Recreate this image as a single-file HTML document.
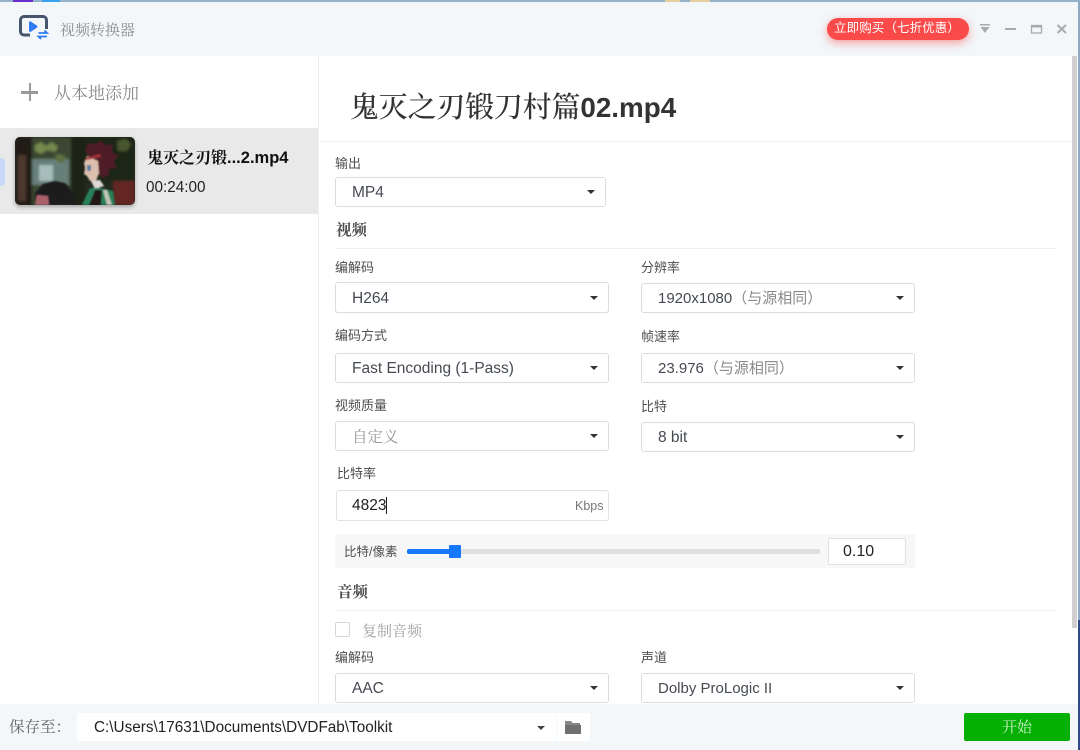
<!DOCTYPE html>
<html lang="zh"><head><meta charset="utf-8"><style>
*{box-sizing:border-box}
html,body{margin:0;padding:0;width:1080px;height:750px;overflow:hidden;background:#fff}
body{position:relative;font-family:"Liberation Sans","Noto Sans CJK SC",sans-serif;filter:blur(.35px)}
.a{position:absolute}
.t{position:absolute;white-space:nowrap;line-height:1}
.lab{font-size:13px;color:#4f4f4f}
.sel{position:absolute;background:#fff;border:1px solid #dcdcdc;border-radius:3px;font-size:15.500px;color:#454a52;padding-left:16px;white-space:nowrap}
.sel:after{content:"";position:absolute;right:10px;top:50%;margin-top:-2px;border-left:4.500px solid transparent;border-right:4.500px solid transparent;border-top:4.500px solid #333}
.g{color:#8a8a8a;font-size:15px}
.h{font-family:"Noto Serif CJK SC",serif;font-weight:700;font-size:15.500px;color:#4d4d4d}
.ln{position:absolute;height:1px;background:#f1f1f1}
.s{font-family:"Noto Serif CJK SC",serif}
</style></head><body>
<div class="a" style="left:0;top:0;width:1080px;height:56px;background:#f3f7fa"></div>
<div class="a" style="left:0;top:0;width:1080px;height:2px;background:#93b3cd"></div>
<div class="a" style="left:13px;top:0;width:20px;height:2px;background:#6a2bd0"></div>
<div class="a" style="left:42px;top:0;width:18px;height:2px;background:#36a3f0"></div>
<div class="a" style="left:665px;top:0;width:15px;height:2px;background:#e6cf9a"></div>
<div class="a" style="left:690px;top:0;width:20px;height:2px;background:#e6cf9a"></div>

<svg class="a" style="left:19px;top:15px" width="31" height="25" viewBox="0 0 31 25"><path d="M11 20H5a3.500 3.500 0 0 1-3.500-3.500V5A3.500 3.500 0 0 1 5 1.500h19A3.500 3.500 0 0 1 27.500 5v9" fill="none" stroke="#46546d" stroke-width="3"/><path d="M10 7.500c0-1 1-1.500 1.800-1l6 4c.8.500.8 1.700 0 2.200l-6 4c-.8.500-1.800 0-1.800-1z" fill="#2f7bf0"/><path d="M19.500 18h8.500l-2.500-2.500M28 21.500h-8.500l2.500 2.500" fill="none" stroke="#2f7bf0" stroke-width="1.800"/></svg>
<div class="t s" style="left:60px;top:22px;font-size:15px;color:#8c8c8c">视频转换器</div>

<div class="a" style="left:827px;top:18px;width:142px;height:22px;border-radius:11px;background:#fa4a4a;box-shadow:0 3px 9px rgba(250,70,70,.5)"></div>
<div class="t" style="left:834px;top:22px;font-size:12.500px;color:#fff;letter-spacing:.1px">立即购买（七折优惠）</div>
<svg class="a" style="left:978px;top:22px" width="66" height="14" viewBox="0 0 66 14"><path d="M2 2h10v1.500H2z" fill="#aaa"/><path d="M2.500 5h9L7 11z" fill="#aaa"/><path d="M27 6h11v2H27z" fill="#aaa"/><rect x="53.500" y="3.500" width="10" height="7.500" fill="none" stroke="#aaa" stroke-width="1.300"/><path d="M53 3h11v2.500H53z" fill="#aaa"/></svg>
<svg class="a" style="left:1056px;top:23px" width="12" height="12" viewBox="0 0 12 12"><path d="M1.500 2l8.500 8M10 2L1.500 10" stroke="#aaa" stroke-width="2"/></svg>

<div class="a" style="left:318px;top:56px;width:1px;height:648px;background:#efefef"></div>
<div class="a" style="left:21px;top:91px;width:17px;height:2.500px;background:#9a9a9a"></div>
<div class="a" style="left:28.500px;top:83px;width:2.500px;height:18px;background:#9a9a9a"></div>
<div class="t s" style="left:54px;top:83px;font-size:17px;color:#8a8a8a">从本地添加</div>

<div class="a" style="left:0;top:128px;width:318px;height:86px;background:#e9e9e9"></div>
<div class="a" style="left:0;top:158px;width:5px;height:28px;background:#c9d8f8;border-radius:0 4px 4px 0"></div>
<svg class="a" style="left:15px;top:137px;border-radius:5px;box-shadow:0 2px 4px rgba(0,0,0,.3)" width="120" height="68" viewBox="0 0 120 68">
<defs><filter id="b" x="-5%" y="-5%" width="110%" height="110%"><feGaussianBlur stdDeviation="1.300"/></filter><filter id="c" x="-5%" y="-5%" width="110%" height="110%"><feGaussianBlur stdDeviation=".7"/></filter></defs>
<rect width="120" height="68" fill="#232a1e"/>
<g filter="url(#b)">
<rect x="14" y="0" width="44" height="68" fill="#3a4630"/>
<rect x="16" y="22" width="38" height="26" fill="#667f78"/>
<rect x="24" y="28" width="14" height="16" fill="#a6bdbb"/>
<path d="M20 8l6-3 5 4 6-4 6 5-3 5-8-2-6 4-6-3z" fill="#75894e"/>
<path d="M40 18l6-1 5 3-3 6-7-2z" fill="#5c7040"/>
<rect x="0" y="0" width="17" height="68" fill="#241c16"/>
<rect x="3" y="18" width="8" height="46" fill="#4d382d"/>
<rect x="56" y="0" width="13" height="68" fill="#1b2018"/>
<rect x="69" y="0" width="51" height="44" fill="#1f2619"/>
<path d="M102 4l9-2 5 5-4 7-9 0z" fill="#46562f"/>
<rect x="98" y="44" width="22" height="24" fill="#642820"/>
</g>
<g filter="url(#c)">
<path d="M20 68V56l8-9 12-3 10 2 7 8 3 14z" fill="#1a1a1e"/>
<path d="M20 68l2-10 11 1 1 9z" fill="#a9616a"/>
<path d="M70 13l3-7 8 1 5-4 4 5 8 0-1 7 7 4-5 5 3 7-8 1 0 6-6 3-8-6-6-14z" fill="#4e1a26"/>
<path d="M69 26l3-7 11 5 1 12-3 8-6 0-3-5-3-2 1-6z" fill="#dcbfae"/>
<path d="M70 21l15-4 1 3-15 3z" fill="#9e3236"/>
<path d="M72 28h4v6h-4z" fill="#5b7fa0"/>
<path d="M76 44l9-1 4 6-9 3z" fill="#dcd8d5"/>
<path d="M67 68l8-17 10 0 13 3 2 14z" fill="#25805a"/>
<path d="M74 68l6-15 7 0-1 15z" fill="#241418"/>
<path d="M88 53l4 0 5 15h-5z" fill="#c4c4b6"/>
</g>
</svg>
<div class="t s" style="left:147px;top:149px;font-size:16px;font-weight:700;color:#111">鬼灭之刃锻<span style="font-family:'Liberation Sans';font-size:16.500px">...2.mp4</span></div>
<div class="t" style="left:146px;top:180px;font-size:15.300px;color:#222">00:24:00</div>

<div class="t s" style="left:350px;top:92px;font-size:28.800px;font-weight:500;color:#333">鬼灭之刃锻刀村篇<span style="font-family:'Liberation Sans';font-weight:700;font-size:27.800px">02.mp4</span></div>
<div class="ln" style="left:319px;top:141px;width:752px"></div>

<div class="t lab" style="left:335px;top:157px">输出</div>
<div class="sel" style="left:335px;top:177px;width:271px;height:30px;line-height:30px">MP4</div>
<div class="t h" style="left:336px;top:222px">视频</div>
<div class="ln" style="left:335px;top:248px;width:722px"></div>

<div class="t lab" style="left:335px;top:261px">编解码</div>
<div class="sel" style="left:335px;top:282px;width:274px;height:31px;line-height:31px">H264</div>
<div class="t lab" style="left:641px;top:261px">分辨率</div>
<div class="sel" style="left:641px;top:283px;width:274px;height:30px;line-height:30px;font-size:15px">1920x1080<span class="g">（与源相同）</span></div>

<div class="t lab" style="left:335px;top:329px">编码方式</div>
<div class="sel" style="left:335px;top:353px;width:274px;height:30px;line-height:30px">Fast Encoding (1-Pass)</div>
<div class="t lab" style="left:641px;top:330px">帧速率</div>
<div class="sel" style="left:641px;top:353px;width:274px;height:30px;line-height:30px;font-size:15px">23.976<span class="g">（与源相同）</span></div>

<div class="t lab" style="left:335px;top:399px">视频质量</div>
<div class="sel s" style="left:335px;top:421px;width:274px;height:30px;line-height:29px;color:#999">自定义</div>
<div class="t lab" style="left:641px;top:400px">比特</div>
<div class="sel" style="left:641px;top:422px;width:274px;height:30px;line-height:30px">8 bit</div>

<div class="t lab" style="left:337px;top:467px">比特率</div>
<div class="a" style="left:336px;top:490px;width:273px;height:31px;background:#fff;border:1px solid #e2e2e2;border-radius:3px"></div>
<div class="t" style="left:352px;top:498px;font-size:15.500px;color:#222">4823</div>
<div class="a" style="left:386px;top:497px;width:1px;height:17px;background:#222"></div>
<div class="t" style="left:575px;top:500px;font-size:12.500px;color:#777">Kbps</div>

<div class="a" style="left:335px;top:534px;width:580px;height:34px;background:#f7f7f8"></div>
<div class="t lab" style="left:344px;top:546px;font-size:12.500px">比特/像素</div>
<div class="a" style="left:407px;top:549px;width:413px;height:5px;background:#dfdfe1;border-radius:2px"></div>
<div class="a" style="left:407px;top:549px;width:44px;height:5px;background:#1677ff;border-radius:2px"></div>
<div class="a" style="left:449px;top:545px;width:12px;height:13px;background:#1677ff;border-radius:1px"></div>
<div class="a" style="left:828px;top:538px;width:78px;height:27px;background:#fff;border:1px solid #e2e2e2;border-radius:2px"></div>
<div class="t" style="left:843px;top:544px;font-size:16px;color:#222">0.10</div>

<div class="t h" style="left:337px;top:584px">音频</div>
<div class="ln" style="left:335px;top:610px;width:722px"></div>
<div class="a" style="left:335px;top:622px;width:15px;height:15px;background:#fff;border:1px solid #d6d6d6;border-radius:2px"></div>
<div class="t s" style="left:362px;top:623px;font-size:15px;color:#a0a0a0">复制音频</div>

<div class="t lab" style="left:335px;top:651px">编解码</div>
<div class="sel" style="left:335px;top:673px;width:274px;height:30px;line-height:30px">AAC</div>
<div class="t lab" style="left:641px;top:651px">声道</div>
<div class="sel" style="left:641px;top:673px;width:274px;height:30px;line-height:30px;font-size:15px">Dolby ProLogic II</div>

<div class="a" style="left:1072px;top:56px;width:5px;height:572px;background:#cfcfcf"></div>
<div class="a" style="left:1078px;top:2px;width:2px;height:748px;background:#8fa9c4"></div>
<div class="a" style="left:1078px;top:620px;width:2px;height:130px;background:#2f4a86"></div>

<div class="a" style="left:0;top:704px;width:1078px;height:46px;background:#f3f7fa"></div>
<div class="t s" style="left:9px;top:719px;font-size:15.500px;color:#666">保存至：</div>
<div class="a" style="left:77px;top:713px;width:479px;height:28px;background:#fff"></div>
<div class="t" style="left:94px;top:720px;font-size:15.300px;color:#222">C:\Users\17631\Documents\DVDFab\Toolkit</div>
<div class="a" style="left:537px;top:726px;border-left:4px solid transparent;border-right:4px solid transparent;border-top:4.500px solid #444"></div>
<div class="a" style="left:557px;top:713px;width:33px;height:28px;background:#fff"></div>
<svg class="a" style="left:564px;top:720px" width="18" height="15" viewBox="0 0 18 15"><path d="M1 1h6l1.500 2H16v2H1z" fill="#888"/><path d="M1 5h16v9H1z" fill="#707070"/></svg>
<div class="a" style="left:964px;top:713px;width:106px;height:28px;background:#05b005;border-radius:2px"></div>
<div class="t s" style="left:1002px;top:719px;font-size:15px;color:#c9f0c9">开始</div>
</body></html>
